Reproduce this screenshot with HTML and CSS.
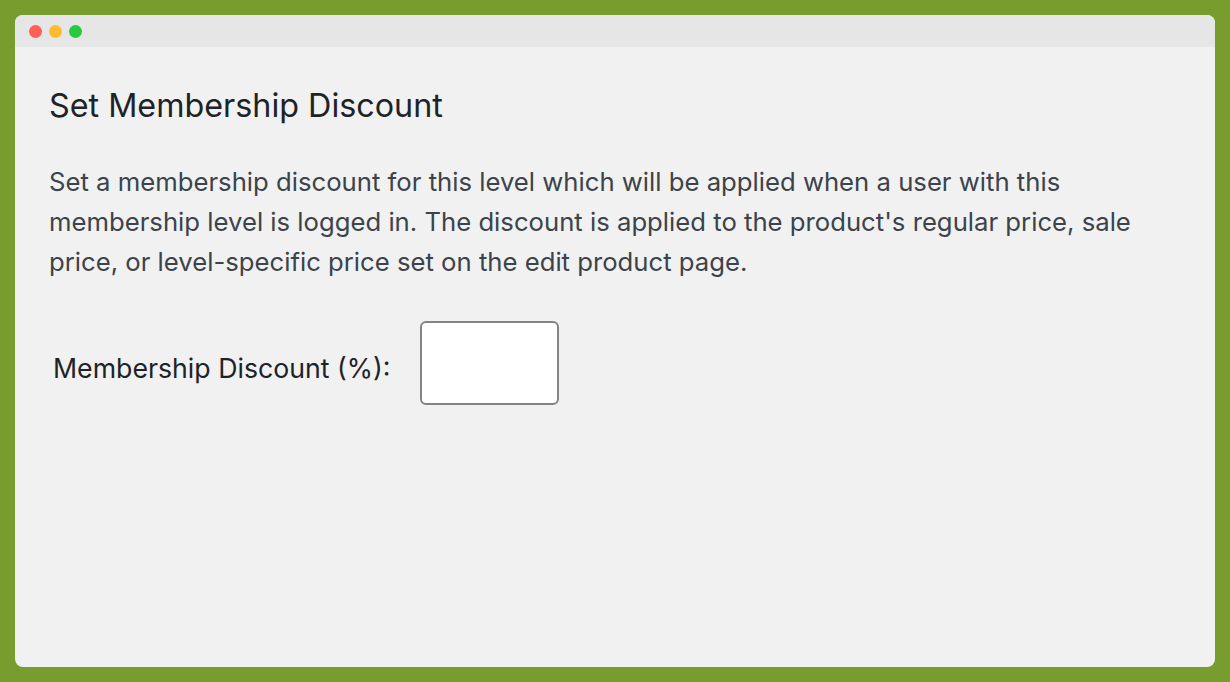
FILE: index.html
```html
<!DOCTYPE html>
<html>
    <head>
        <link rel="stylesheet" href="styles.css">
    </head>
    <body>
        <div class="window">
            <div class="titlebar">
                <span class="dot red"></span>
                <span class="dot yellow"></span>
                <span class="dot green"></span>
            </div>
            <div class="content">
                <h2 class="heading">Set Membership Discount</h2>
                <p class="intro">Set a membership discount for this level which will be applied when a user with this membership level is logged in. The discount is applied to the product's regular price, sale price, or level-specific price set on the edit product page.</p>
                <div class="field-row">
                    <label for="discount" class="field-label">Membership Discount (%):</label>
                    <input type="text" id="discount" class="field-input">
                </div>
            </div>
        </div>
    </body>
</html>
```

FILE: styles.css
```css
body {
    margin: 0;
    padding: 15px;
    background-color: #789d2e;
    font-family: Inter, "Noto Sans", sans-serif;
}
.window {
    height: 652px;
    background-color: #f1f1f1;
    border-radius: 8px;
    overflow: hidden;
}
.titlebar {
    height: 32px;
    background-color: #e6e6e6;
    display: flex;
    align-items: center;
    gap: 7px;
    padding-left: 14px;
}
.dot {
    width: 13px;
    height: 13px;
    border-radius: 50%;
}
.red {
    background-color: #ff5f57;
}
.yellow {
    background-color: #febc2e;
}
.green {
    background-color: #28c840;
}
.content {
    padding: 0 34px;
}
.heading {
    margin: 0;
    padding-top: 39px;
    font-size: 32.3px;
    font-weight: 400;
    line-height: 40px;
    color: #1d2327;
}
.intro {
    margin: 36px 0 0 0;
    font-size: 25.7px;
    line-height: 40px;
    color: #3c434a;
    max-width: 1100px;
}
.field-row {
    display: flex;
    align-items: center;
    margin-top: 39px;
    padding-left: 4px;
}
.field-label {
    font-size: 26.7px;
    color: #1d2327;
    width: 367px;
    padding-top: 10px;
}
.field-input {
    box-sizing: border-box;
    width: 139px;
    height: 84px;
    border: 2px solid #848484;
    border-radius: 6px;
    background-color: white;
    outline: none;
}
```
